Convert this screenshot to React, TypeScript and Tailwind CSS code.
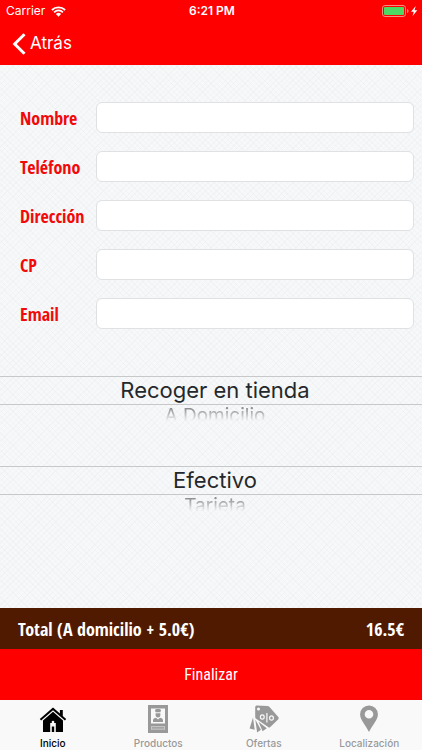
import React, { useState } from 'react';

interface Field {
  id: string;
  label: string;
  type: string;
}

interface WheelProps {
  name: string;
  title: string;
  options: string[];
}

interface Tab {
  label: string;
  icon: React.ReactNode;
}

const fields: Field[] = [
  { id: 'nombre', label: 'Nombre', type: 'text' },
  { id: 'telefono', label: 'Teléfono', type: 'tel' },
  { id: 'direccion', label: 'Dirección', type: 'text' },
  { id: 'cp', label: 'CP', type: 'text' },
  { id: 'email', label: 'Email', type: 'email' },
];

const WifiIcon = () => (
  <svg width="15" height="11" viewBox="0 0 15 11" fill="none" stroke="currentColor" strokeWidth="1.8">
    <path d="M0.9 4A9.4 9.4 0 0 1 14.1 4" />
    <path d="M3.1 6.3A6.2 6.2 0 0 1 11.9 6.3" />
    <path d="M7.5 10.8L4.9 8.1A3.7 3.7 0 0 1 10.1 8.1Z" fill="currentColor" stroke="none" />
  </svg>
);

const BatteryIcon = () => (
  <svg width="36" height="12" viewBox="0 0 36 12">
    <rect x="0.5" y="0.5" width="23" height="11" rx="2.5" fill="none" stroke="#ff8a80" />
    <rect x="2" y="2" width="20" height="8" rx="1" fill="#4cd964" />
    <path d="M25 4v4c1-.4 1.5-1.1 1.5-2S26 4.400 25 4Z" fill="#ff8a80" />
    <path d="M33.800 1L29 6.800h2.800L30.600 11l4.700-5.800h-2.800Z" fill="#fff" />
  </svg>
);

const HomeIcon = () => (
  <svg width="28" height="28" viewBox="0 0 28 28" fill="currentColor">
    <path d="M14 2.500L0.800 14l1.300 1.400L14 5.200l11.900 10.200 1.300-1.400-3.400-3V5h-2.900v3.400Z" />
    <path
      fillRule="evenodd"
      d="M14 6.800L4 15.400V27h20V15.400ZM14 15.800a1.300 1.300 0 0 1 1 2.200h1.800V27h-1.600v-5.500h-2.400V27h-1.600v-9H13a1.300 1.300 0 0 1 1-2.200Z"
    />
  </svg>
);

const ProductsIcon = () => (
  <svg width="20" height="28" viewBox="0 0 20 28" fill="currentColor">
    <path fillRule="evenodd" d="M0 0h20v28H0ZM3 3.500v15h14v-15Z" />
    <path d="M7 5.300c0-.9 1.300-1.300 3-1.300s3 .4 3 1.300l-.6 2H7.600ZM7.600 8.200h4.800v1.600a2.400 2.700 0 0 1-4.800 0Z" />
    <path d="M5 17v-1.700c0-1.500 1.500-2.300 3-2.600l2 1.900 2-1.900c1.500.3 3 1.100 3 2.600V17Z" />
    <path d="M3 21h14v4H3Z" fill="#c4c4c4" />
    <path d="M4 22h12v.8H4ZM4 23.500h12v.8H4Z" />
  </svg>
);

const OffersIcon = () => (
  <svg width="30" height="28" viewBox="0 0 30 28" fill="currentColor">
    <path
      fillRule="evenodd"
      d="M6.200 2.200C6.200 1.300 7 .6 8 .6L18.500 1c.8 0 1.300.3 1.800.8l9 10.300c.6.700.6 1.400 0 2.100L21.300 22c-.8.700-1.500.7-2.200 0L6.800 13.400c-.4-.4-.6-.9-.6-1.500ZM9.500 2.500a1.500 1.500 0 1 0 0 3 1.500 1.500 0 0 0 0-3Z"
    />
    <g fill="none" stroke="#f9f9f9" strokeWidth="1.200">
      <ellipse cx="13.300" cy="12" rx="1.900" ry="2.200" />
      <path d="M17.900 8v9.500" />
      <ellipse cx="22.500" cy="13" rx="1.900" ry="2.200" />
    </g>
    <path d="M4 12.500L5.700 24.800 0.600 23.600ZM6.300 14.500l5.600 10.300-3.800 2.700ZM9.500 16.700l8.300 6.600-4.200 2.900Z" />
  </svg>
);

const PinIcon = () => (
  <svg width="18" height="28" viewBox="0 0 18 28" fill="currentColor">
    <path
      fillRule="evenodd"
      d="M9 .5a8.800 8.800 0 0 1 8.900 8.900C17.900 14.500 12.500 20 9 27 5.500 20 .1 14.500.1 9.400A8.800 8.800 0 0 1 9 .5ZM9 5a4.300 4.300 0 1 0 0 8.600A4.300 4.300 0 0 0 9 5Z"
    />
  </svg>
);

const tabs: Tab[] = [
  { label: 'Inicio', icon: <HomeIcon /> },
  { label: 'Productos', icon: <ProductsIcon /> },
  { label: 'Ofertas', icon: <OffersIcon /> },
  { label: 'Localización', icon: <PinIcon /> },
];

const Wheel: React.FC<WheelProps> = ({ name, title, options }) => {
  const [selected, setSelected] = useState(options[0]);
  const rest = options.filter((option) => option !== selected);

  return (
    <fieldset aria-label={title} className="relative h-[90px] text-center">
      <label className="block h-[29px] border-y border-[#c6c8ca] pl-2 text-[22px] leading-[27px] text-[#25282b]">
        <input type="radio" name={name} value={selected} checked readOnly className="sr-only" />
        {selected}
      </label>
      {rest.map((option) => (
        <label
          key={option}
          className="block h-4 pl-2 text-[19px] leading-[22px] text-[#8c8e90] mask-b-from-20% mask-b-to-100%"
        >
          <input
            type="radio"
            name={name}
            value={option}
            checked={false}
            onChange={() => setSelected(option)}
            className="sr-only"
          />
          {option}
        </label>
      ))}
    </fieldset>
  );
};

const App: React.FC = () => (
  <div className="flex min-h-screen flex-col bg-[#f6f8f9] bg-[repeating-linear-gradient(45deg,#e4e7ea40_0_1px,transparent_1px_4px),repeating-linear-gradient(-45deg,#e4e7ea40_0_1px,transparent_1px_4px)] font-['Inter',sans-serif]">
    <header className="bg-[#ff0000] text-white">
      <div className="grid h-[22px] grid-cols-3 items-center pr-1 pl-[6px] text-[12px]">
        <div className="flex items-center gap-[6px]">
          <span>Carrier</span>
          <WifiIcon />
        </div>
        <span className="text-center font-semibold">6:21 PM</span>
        <div className="flex justify-end">
          <BatteryIcon />
        </div>
      </div>
      <div className="flex h-[43px] items-center pl-3">
        <button type="button" className="flex items-center gap-1 text-[17px]">
          <svg width="14" height="22" viewBox="0 0 14 22" fill="none" stroke="currentColor" strokeWidth="3">
            <path d="M12.500 1.200L2.700 11l9.800 9.800" />
          </svg>
          Atrás
        </button>
      </div>
    </header>

    <main className="flex flex-1 flex-col">
      <form className="flex flex-col gap-[18px] pt-[37px] pr-2 pl-5">
        {fields.map((field) => (
          <div key={field.id} className="flex items-center">
            <label
              htmlFor={field.id}
              className="w-[76px] font-['Open_Sans_Condensed','Roboto_Condensed',sans-serif] text-[18px] leading-6 font-bold text-[#f00a0a]"
            >
              {field.label}
            </label>
            <input
              id={field.id}
              type={field.type}
              className="h-[31px] min-w-0 flex-1 rounded-md border border-[#dfe1e3] bg-white px-2 text-sm outline-none"
            />
          </div>
        ))}
      </form>
      <div className="pt-[47px]">
        <Wheel name="entrega" title="Entrega" options={['Recoger en tienda', 'A Domicilio']} />
        <Wheel name="pago" title="Forma de pago" options={['Efectivo', 'Tarjeta']} />
      </div>
    </main>

    <div className="text-white">
      <div className="flex h-[41px] items-center justify-between bg-[#4f1a00] px-[18px] font-['Open_Sans_Condensed','Roboto_Condensed',sans-serif] text-[18px] leading-6 font-bold">
        <span>Total (A domicilio + 5.0€)</span>
        <span>16.5€</span>
      </div>
      <button type="button" className="h-[51px] w-full bg-[#ff0000] font-['Roboto_Condensed',sans-serif] text-[16px]">
        Finalizar
      </button>
    </div>

    <nav className="grid h-[50px] grid-cols-4 bg-[#f9f9f9] pt-[5px]">
      {tabs.map((tab, idx) => (
        <a
          key={tab.label}
          href="#"
          className={`flex flex-col items-center gap-[2px] text-[10px] leading-[16px] font-medium ${idx === 0 ? 'text-black' : 'text-[#999999]'}`}
        >
          {tab.icon}
          <span>{tab.label}</span>
        </a>
      ))}
    </nav>
  </div>
);

export default App;
